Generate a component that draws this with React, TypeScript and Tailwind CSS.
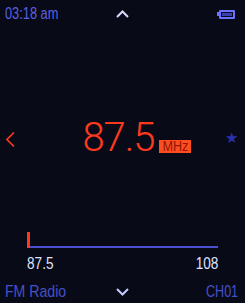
const narrow = { fontFamily: '"Liberation Sans", Arial, sans-serif' };

function Chevron({ up, color }: { up?: boolean; color: string }) {
  return (
    <svg width="13" height="8" viewBox="0 0 13 8" className={color}>
      <polyline
        points={up ? "1,7 6.5,1.5 12,7" : "1,1 6.5,6.5 12,1"}
        fill="none"
        stroke="currentColor"
        strokeWidth="2"
      />
    </svg>
  );
}

export default function App() {
  return (
    <div className="w-[245px] h-[303px] bg-[#080a18] flex flex-col overflow-hidden select-none" style={narrow}>
      {/* ── Status bar ── */}
      <div className="grid grid-cols-3 items-center h-[18px] mt-[5px] px-[5px]">
        <span className="inline-block origin-left scale-x-[0.8] text-[16px] leading-[18px] text-[#5b60e0] whitespace-nowrap">
          03:18 am
        </span>
        <div className="flex justify-center pl-[1px]">
          <Chevron up color="text-[#d8daff]" />
        </div>
        <div className="flex justify-end pr-[5px]">
          <div className="flex items-center">
            <div className="w-[2px] h-[4px] bg-[#6a70ff]" />
            <div className="w-[16px] h-[9px] border-[2px] border-[#6a70ff] rounded-[1px] p-[1px]">
              <div className="w-full h-full bg-[#3a3fb0]" />
            </div>
          </div>
        </div>
      </div>

      {/* ── Frequency ── */}
      <div className="flex items-center justify-between mt-[100px] px-[6px] h-[30px]">
        <svg width="9" height="15" viewBox="0 0 9 15" className="text-[#ff3a1c] mt-[2px]">
          <polyline points="8,0.5 1,7.5 8,14.5" fill="none" stroke="currentColor" strokeWidth="1.6" />
        </svg>
        <div className="relative -ml-[3px]">
          <span
            className="block text-[40px] leading-[30px] font-light tracking-[-1px] text-[#ff3a1c]"
            style={{ fontFamily: "Roboto, sans-serif" }}
          >
            87.5
          </span>
          <span className="absolute left-[calc(100%+4px)] bottom-[0px] bg-[#ff4d1e] text-[#8e1606] text-[14px] leading-[13px] px-[2px] whitespace-nowrap">
            <span className="inline-block scale-x-[0.9]">MHz</span>
          </span>
        </div>
        <span className="text-[15px] text-[#2a30a8] mr-[1px]">★</span>
      </div>

      {/* ── Tuning bar ── */}
      <div className="mx-[27px] mt-[79px] flex items-end h-[16px]">
        <div className="w-[3px] h-[16px] bg-[#ff3a1c]" />
        <div className="flex-1 h-[2px] bg-[#4b50d0]" />
      </div>
      <div className="mx-[27px] mt-[8px] flex justify-between text-[17px] leading-[16px] text-[#dfe1ff]">
        <span className="inline-block origin-left scale-x-[0.8]">87.5</span>
        <span className="inline-block origin-right scale-x-[0.8]">108</span>
      </div>

      {/* ── Footer ── */}
      <div className="grid grid-cols-3 items-center mt-[auto] mb-[2px] px-[5px] h-[18px]">
        <span className="inline-block origin-left scale-x-[0.83] text-[17px] leading-[18px] text-[#4750c8] whitespace-nowrap">
          FM Radio
        </span>
        <div className="flex justify-center pl-[1px]">
          <Chevron color="text-[#c8cbff]" />
        </div>
        <span className="block origin-right scale-x-[0.74] text-[17px] leading-[18px] text-[#4750c8] text-right pr-[3px]">
          CH01
        </span>
      </div>
    </div>
  );
}
